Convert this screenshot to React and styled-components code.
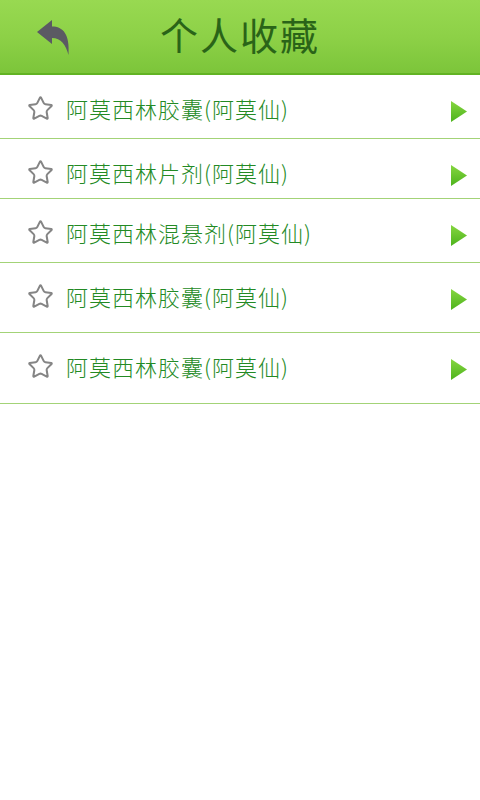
import React from 'react';
import styled, { createGlobalStyle } from 'styled-components';
import { Star } from 'lucide-react';

const GlobalStyle = createGlobalStyle`
  html, body {
    margin: 0;
    padding: 0;
    background: #ffffff;
  }

  body {
    font-family: 'Noto Sans CJK SC', 'Noto Sans', sans-serif;
  }
`;

const Page = styled.div`
  width: 480px;
  min-height: 800px;
  background: #ffffff;
`;

const Header = styled.header`
  display: grid;
  grid-template-columns: 100px 1fr 100px;
  align-items: center;
  height: 73px;
  background: linear-gradient(to bottom, #98d951 0%, #8dd147 50%, #7cc53a 100%);
  border-bottom: 2px solid #62b323;
`;

const BackButton = styled.button`
  display: flex;
  align-items: center;
  justify-content: flex-start;
  padding: 0 0 0 34px;
  height: 100%;
  border: 0;
  background: none;
  cursor: pointer;
`;

const Title = styled.h1`
  margin: 0 0 6px;
  text-align: center;
  font-size: 38px;
  font-weight: 400;
  letter-spacing: 2px;
  color: #2a6418;
  line-height: 1;
`;

const List = styled.ul`
  margin: 0;
  padding: 0;
  list-style: none;
`;

const Row = styled.li`
  display: flex;
  align-items: center;
  height: ${({ $h }) => $h}px;
  box-sizing: border-box;
  padding: 20px 12px 0 27px;
  align-items: flex-start;
  border-bottom: 1px solid #a3d377;
  cursor: pointer;
`;

const StarIcon = styled(Star)`
  flex: none;
  color: #858585;
`;

const Name = styled.span`
  flex: 1;
  margin-left: 12px;
  font-family: 'Noto Sans CJK SC', sans-serif;
  font-size: 22px;
  font-weight: 300;
  line-height: 27px;
  letter-spacing: 1px;
  color: #238a24;
  white-space: nowrap;
`;

const Tail = styled.span`
  display: flex;
  padding-top: 6px;
`;

const BackArrow = () => (
  <svg width="38" height="42" viewBox="0 0 38 42">
    <path
      d="M3 16 L18 4 L18 10.5 C29 10.5 36 18 34.5 39 C32 29 27 22 18 22 L18 28 Z"
      fill="#5b5a63"
    />
  </svg>
);

const Arrow = () => (
  <svg width="18" height="21" viewBox="0 0 18 21">
    <defs>
      <linearGradient id="tri" x1="0" y1="0" x2="0" y2="1">
        <stop offset="0" stopColor="#86d640" />
        <stop offset="1" stopColor="#4db31c" />
      </linearGradient>
    </defs>
    <polygon points="1,0 17,10.5 1,21" fill="url(#tri)" />
  </svg>
);

const favorites = [
  { name: '阿莫西林胶囊(阿莫仙)', h: 64 },
  { name: '阿莫西林片剂(阿莫仙)', h: 60 },
  { name: '阿莫西林混悬剂(阿莫仙)', h: 64 },
  { name: '阿莫西林胶囊(阿莫仙)', h: 70 },
  { name: '阿莫西林胶囊(阿莫仙)', h: 71 },
];

const App = () => (
  <>
    <GlobalStyle />
    <Page>
      <Header>
        <BackButton type="button" aria-label="返回">
          <BackArrow />
        </BackButton>
        <Title>个人收藏</Title>
        <span />
      </Header>
      <List>
        {favorites.map((item, i) => (
          <Row key={i} $h={item.h}>
            <StarIcon size={27} strokeWidth={1.8} />
            <Name>{item.name}</Name>
            <Tail>
              <Arrow />
            </Tail>
          </Row>
        ))}
      </List>
    </Page>
  </>
);

export default App;
